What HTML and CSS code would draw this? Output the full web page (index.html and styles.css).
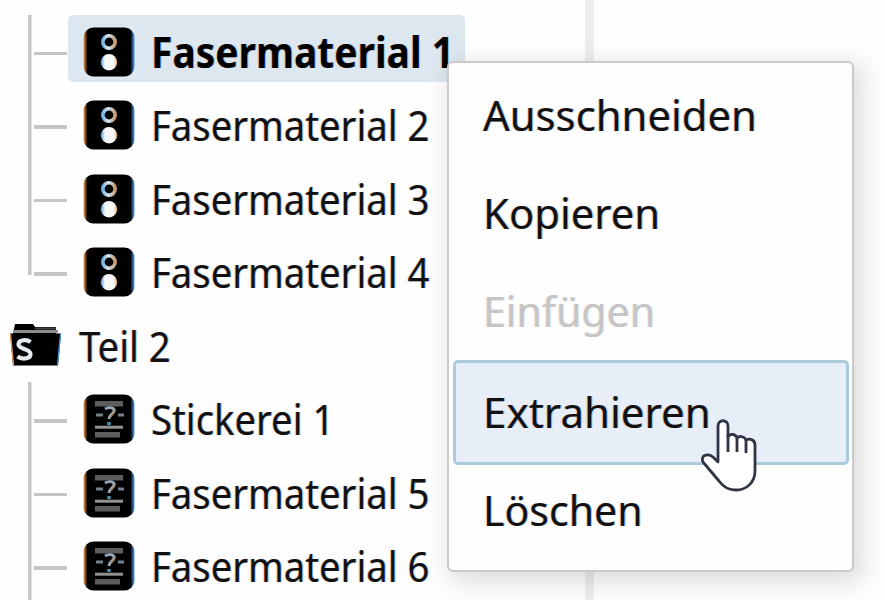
FILE: index.html
```
<!DOCTYPE html>
<html lang="de">
<head>
<meta charset="utf-8">
<title>Objektbaum</title>
<link rel="stylesheet" href="styles.css">
</head>
<body>
<svg class="defs" aria-hidden="true">
  <defs>
    <linearGradient id="fringe">
      <stop offset="0" stop-color="#f5a04e"/><stop offset=".08" stop-color="#000"/>
      <stop offset=".92" stop-color="#000"/><stop offset="1" stop-color="#4aa0f5"/>
    </linearGradient>
    <linearGradient id="ring">
      <stop offset="0" stop-color="#6fb4ea"/><stop offset=".45" stop-color="#e8e8e8"/>
      <stop offset=".6" stop-color="#c5d3de"/><stop offset="1" stop-color="#c99a6c"/>
    </linearGradient>
    <linearGradient id="dot">
      <stop offset="0" stop-color="#469be8"/><stop offset=".25" stop-color="#f7f7f7"/>
      <stop offset=".8" stop-color="#f7f7f7"/><stop offset="1" stop-color="#e9a463"/>
    </linearGradient>
  </defs>
  <symbol id="fiber" viewBox="0 0 52 50">
    <rect x=".5" y=".5" width="51" height="49" rx="10" fill="url(#fringe)"/>
    <circle cx="26" cy="15" r="6.200" fill="#000" stroke="url(#ring)" stroke-width="3.600"/>
    <circle cx="26" cy="35.300" r="8.200" fill="url(#dot)"/>
  </symbol>
  <symbol id="stitch" viewBox="0 0 52 50">
    <rect x=".5" y=".5" width="51" height="49" rx="10" fill="url(#fringe)"/>
    <path d="M12 7h28v5.500H12zM12 38h25v5.500H12z" fill="#5d5d5d"/>
    <path d="M12 33.200h28" stroke="#929292" stroke-width="3"/>
    <path d="M13 21h7M35 21h6" stroke="#75818a" stroke-width="3"/>
    <path d="M22 15c3-2 9-2 9 1.500 0 3.500-5 4-5 8.500" fill="none" stroke="#93a8ba" stroke-width="2.800"/>
    <path d="M32 15c1.500 4-3 5-4.500 8" fill="none" stroke="#b77b3d" stroke-width="1.200"/>
    <path d="M26 28v3" stroke="#4793ad" stroke-width="3.500"/>
  </symbol>
</svg>
<main class="app">
  <nav class="tree">
    <ul class="group group-first">
      <li class="row"><div class="node selected"><svg class="icon"><use href="#fiber"/></svg><span class="label strong">Fasermaterial 1</span></div></li>
      <li class="row"><div class="node"><svg class="icon"><use href="#fiber"/></svg><span class="label">Fasermaterial 2</span></div></li>
      <li class="row"><div class="node"><svg class="icon"><use href="#fiber"/></svg><span class="label">Fasermaterial 3</span></div></li>
      <li class="row"><div class="node"><svg class="icon"><use href="#fiber"/></svg><span class="label">Fasermaterial 4</span></div></li>
    </ul>
    <div class="folder">
      <svg class="folder-icon" viewBox="0 0 54 44">
        <path d="M6 1h18l2 3h21v7H4z" fill="#000"/>
        <path d="M4 8.500h45" stroke="#8c8c8c" stroke-width="3"/>
        <path d="M26 5.500h21" stroke="#444" stroke-width="2"/>
        <path d="M1 10.500h51l-3 32H4z" fill="#000"/>
        <path d="M1.500 11l3 31" stroke="#e99a4e" stroke-width="1.300"/>
        <path d="M51.500 11l-3 31" stroke="#3b8de0" stroke-width="1.300"/>
        <path d="M21.500 19c-4-3-12-2.500-12 2.500 0 5 12 4 12 9.500 0 5.500-9 5.500-13 2.500" fill="none" stroke="#e3eaf0" stroke-width="4.200"/>
      </svg>
      <span class="label folder-label">Teil 2</span>
    </div>
    <ul class="group group-second">
      <li class="row"><div class="node"><svg class="icon"><use href="#stitch"/></svg><span class="label">Stickerei 1</span></div></li>
      <li class="row"><div class="node"><svg class="icon"><use href="#stitch"/></svg><span class="label">Fasermaterial 5</span></div></li>
      <li class="row"><div class="node"><svg class="icon"><use href="#stitch"/></svg><span class="label">Fasermaterial 6</span></div></li>
    </ul>
  </nav>
  <div class="divider"></div>
  <div class="menu">
    <div class="item"><span class="label cut">Ausschneiden</span></div>
    <div class="item"><span class="label copy">Kopieren</span></div>
    <div class="item disabled"><span class="label paste">Einfügen</span></div>
    <div class="item active"><span class="label extract">Extrahieren</span></div>
    <div class="item last"><span class="label remove">Löschen</span></div>
  </div>
  <svg class="cursor" viewBox="0 0 58 76">
    <path d="M18 45V9c0-7 10-7 10 0v11c2-4 8-3 9 1 3-3 8-1 9 2 4-2 9 0 9 5v26c0 11-8 19-19 19-6 0-12-2-17-9L3 45c-3-7 5-9 10-5z" fill="#fff" stroke="#313447" stroke-width="2.800" stroke-linejoin="round"/>
    <path d="M28 18v17M37 20v15M46 22v14" fill="none" stroke="#313447" stroke-width="2.800"/>
  </svg>
</main>
</body>
</html>
```
FILE: styles.css
```
* { box-sizing: border-box; }
body { margin: 0; background: #fff; }
.defs { position: absolute; width: 0; height: 0; }
.app {
  position: relative;
  display: flex;
  width: 885px;
  height: 600px;
  overflow: hidden;
  background: #fefefe;
  color: #111;
  font: 42.5px/58px "Noto Sans", sans-serif;
}
.tree { width: 585px; flex: none; padding-top: 11.75px; }
.divider { width: 9px; background: #ededed; }
.group { list-style: none; margin: 0; padding: 0; background: linear-gradient(#c5c5c5, #c5c5c5) 28px 3px / 3.5px 100% no-repeat; }
.group-first { background-size: 3.5px 260px; }
.row { display: flex; align-items: center; height: 73.5px; }
.row::before { content: ""; width: 33px; height: 3.5px; margin: 10px 1px 0 34px; background: #c5c5c5; }
.node { display: flex; align-items: center; height: 67px; padding-left: 15px; white-space: nowrap; }
.selected { width: 397px; border-radius: 5px; background: #dde7f0; color: #000; }
.icon { flex: none; width: 52px; height: 50px; margin: 6px 16px 0 0; }
.label {
  display: inline-block;
  margin-top: 6px;
  white-space: nowrap;
  transform-origin: 0 50%;
  transform: scaleX(.9);
  text-shadow: -1px 0 rgba(245, 150, 70, .45), 1px 0 rgba(50, 140, 245, .45);
}
.strong { font-weight: 700; transform: scaleX(.917); }
.folder { display: flex; align-items: center; height: 73.5px; padding-left: 9px; }
.folder-icon { width: 54px; height: 44px; margin: 5px 16px 0 0; }
.menu {
  position: absolute;
  left: 447px;
  top: 61px;
  width: 407px;
  height: 511px;
  padding: 3px;
  border: 2.500px solid #cacaca;
  border-radius: 6px;
  background: #fefefe;
  box-shadow: 6px 7px 24px 4px rgba(0, 0, 0, .13);
}
.item { display: flex; align-items: center; height: 98px; padding-left: 31px; }
.item .label { margin-top: 0; }
.item .cut, .item .copy { transform: scaleX(.984); }
.item .paste, .item .remove { transform: scaleX(.966); }
.item .extract { margin-top: -2px; transform: scaleX(.99); }
.item .remove { margin-top: -3px; }
.disabled { color: #c5c5c5; }
.disabled .label { text-shadow: -1px 0 rgba(245, 150, 70, .2), 1px 0 rgba(50, 140, 245, .2); }
.active { height: 105px; margin: 0 0 0 1px; border: 3px solid #abcbdd; border-radius: 5px; background: #e7eef7; padding-left: 27px; }
.last { height: 92px; }
.cursor { position: absolute; left: 700px; top: 417px; width: 58px; height: 76px; }
```
